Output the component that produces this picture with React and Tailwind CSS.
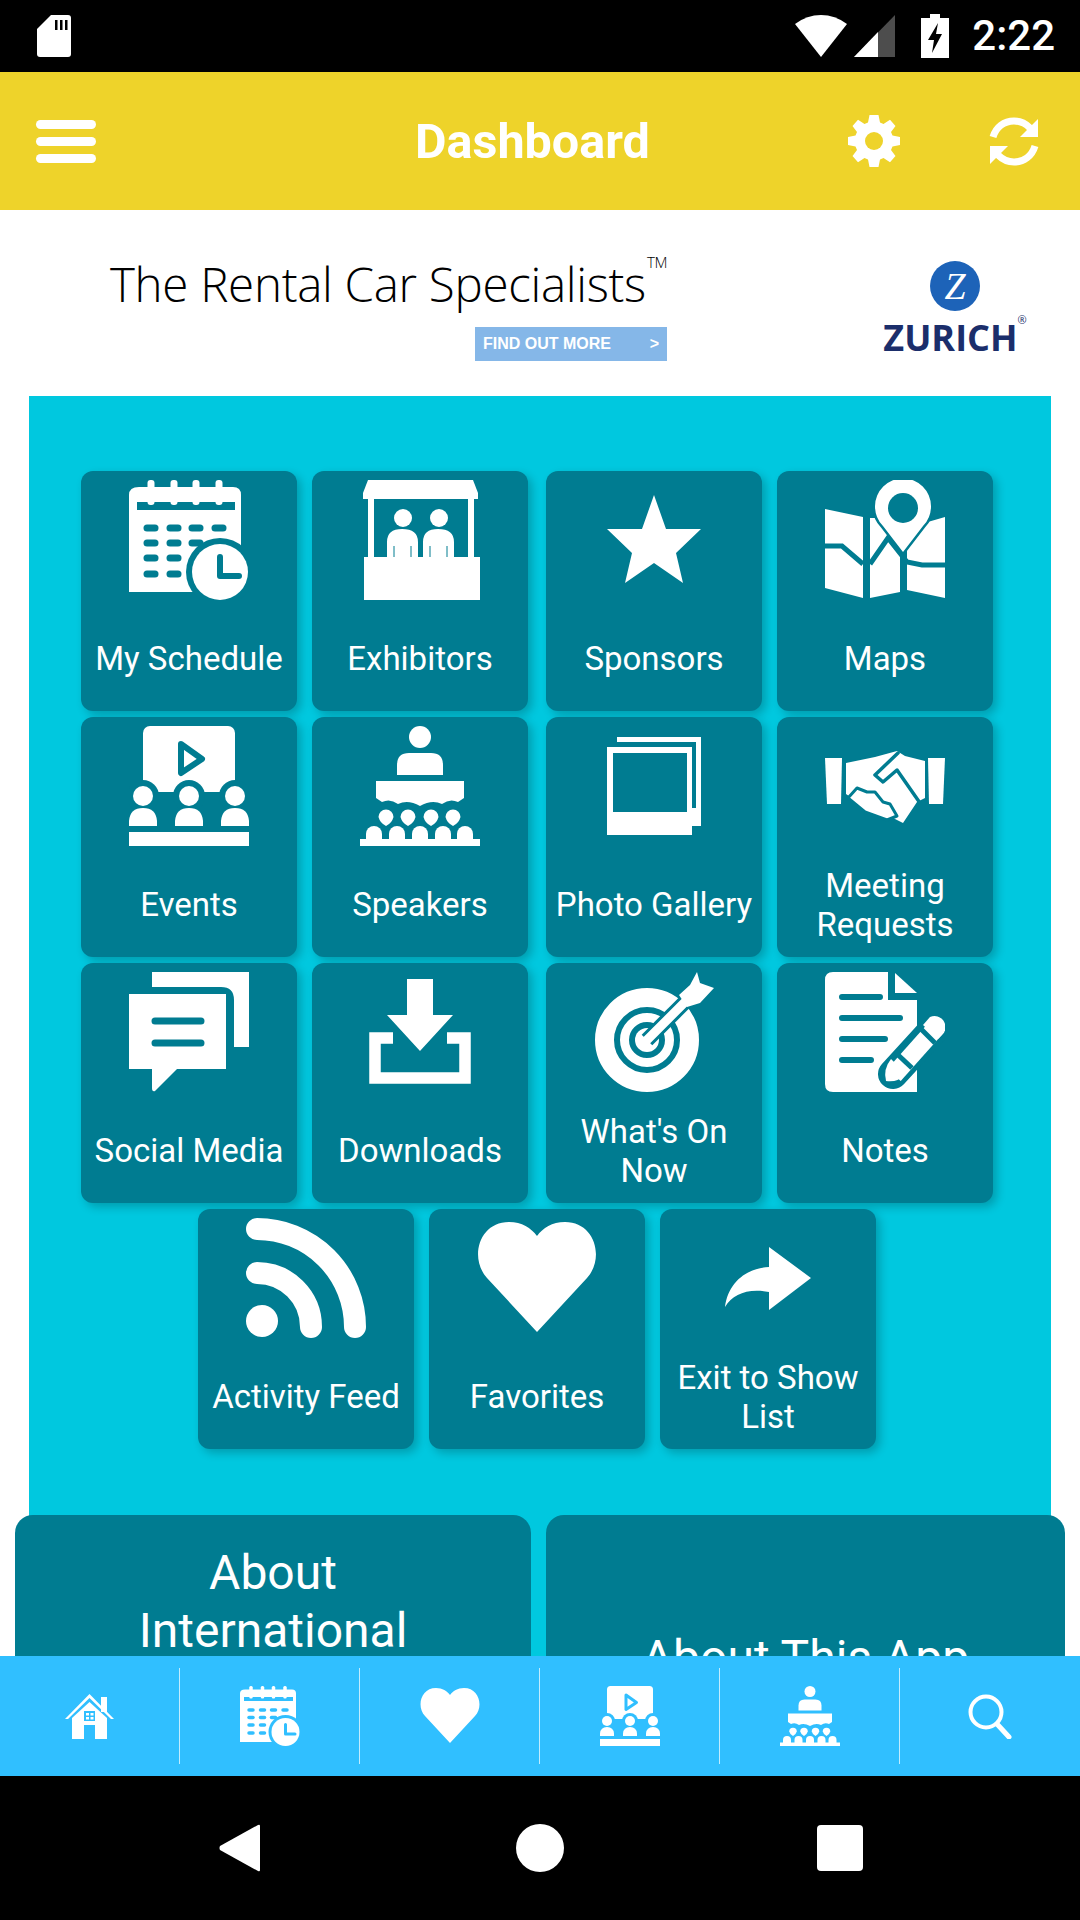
const TEAL = '#007c91'
const SKY = '#30bfff'

function CalendarIcon({ cut = TEAL, className }) {
  const cols = [22, 45, 67, 90]
  const rowsOfDots = [
    [48, 4],
    [63, 3],
    [78, 2],
    [94, 2],
  ]
  return (
    <svg viewBox="0 0 120 120" className={className}>
      <path d="M10 7H104Q112 7 112 15V112H0V15Q0 7 10 7Z" fill="#fff" />
      <path d="M8 22H106V30H8Z" fill={cut} />
      {cols.map((x) => (
        <rect key={x} x={x - 3.5} y="0" width="7" height="25" rx="3" fill="#fff" />
      ))}
      {rowsOfDots.map(([y, n]) =>
        cols.slice(0, n).map((x) => (
          <rect key={`${x}-${y}`} x={x - 7.5} y={y - 3.5} width="15" height="7" rx="3.5" fill={cut} />
        ))
      )}
      <circle cx="91" cy="92" r="34" fill={cut} />
      <path d="M112 58H120V92H112Z" fill={cut} />
      <circle cx="91" cy="92" r="28" fill="#fff" />
      <path d="M91 77V96H110" fill="none" stroke={cut} strokeWidth="6" strokeLinecap="round" strokeLinejoin="round" />
    </svg>
  )
}

function BoothIcon({ cut = TEAL, className }) {
  return (
    <svg viewBox="0 0 120 120" className={className}>
      <path d="M8 0H113L118 13V19H3V13Z" fill="#fff" />
      <rect x="8" y="19" width="6" height="60" fill="#fff" />
      <rect x="108" y="19" width="6" height="60" fill="#fff" />
      <path d="M27 77V62Q27 49 42 49Q58 49 58 62V77ZM63 77V62Q63 49 78 49Q94 49 94 62V77Z" fill="#fff" />
      <circle cx="43" cy="38" r="9" fill="#fff" />
      <circle cx="79" cy="38" r="9" fill="#fff" />
      <path d="M34 66V77M51 66V77M70 66V77M87 66V77" stroke={cut} strokeWidth="1" />
      <rect x="4" y="77" width="116" height="43" fill="#fff" />
    </svg>
  )
}

function StarIcon({ className }) {
  return (
    <svg viewBox="0 0 120 120" className={className}>
      <path d="M60 15L72 49H107L82 73L89 103L60 83L31 103L38 73L13 49H48Z" fill="#fff" />
    </svg>
  )
}

function MapIcon({ cut = TEAL, className }) {
  return (
    <svg viewBox="0 0 120 120" className={className}>
      <path d="M0 29L38 37V118L0 108ZM45 38H75V112L45 118ZM82 48L120 37V118L82 110Z" fill="#fff" />
      <path d="M0 66H17L38 84M45 84L63 58L82 82L97 85H120" fill="none" stroke={cut} strokeWidth="5" />
      <path d="M78 72L58 46A28 28 0 1 1 98 46Z" fill="#fff" stroke={cut} strokeWidth="5" strokeLinejoin="round" paintOrder="stroke" />
      <circle cx="78" cy="28" r="15" fill={cut} />
    </svg>
  )
}

function EventsIcon({ cut = TEAL, className }) {
  const people = [14, 60, 106]
  return (
    <svg viewBox="0 0 120 120" className={className}>
      <rect x="14" y="0" width="92" height="66" rx="7" fill="#fff" />
      <path d="M52 18L73 33L52 47Z" fill="none" stroke={cut} strokeWidth="6" strokeLinejoin="round" />
      {people.map((x) => (
        <g key={x}>
          <circle cx={x} cy="70" r="16" fill={cut} />
          <circle cx={x} cy="70" r="10" fill="#fff" />
          <path d={`M${x - 14} 100V95Q${x - 13} 82 ${x} 82Q${x + 13} 82 ${x + 14} 95V100Z`} fill="#fff" />
        </g>
      ))}
      <rect x="0" y="106" width="120" height="14" fill="#fff" />
    </svg>
  )
}

function SpeakerIcon({ className }) {
  return (
    <svg viewBox="0 0 120 120" className={className}>
      <circle cx="60" cy="11" r="11" fill="#fff" />
      <path d="M37 49V39Q37 27 49 27H71Q83 27 83 39V49Z" fill="#fff" />
      <path d="M16 55H104V72L98 76Q90 72 82 78Q72 73 60 80Q48 73 38 78Q30 72 22 76L16 72Z" fill="#fff" />
      {[26, 48, 71, 93].map((x) => (
        <path key={x} d={`M${x - 7.5} 91A7.5 7.5 0 0 1 ${x + 7.5} 91Q${x + 6} 97 ${x} 100Q${x - 6} 97 ${x - 7.5} 91Z`} fill="#fff" />
      ))}
      {[14, 37, 60, 83, 105].map((x) => (
        <path key={x} d={`M${x - 8} 114V108A8 8 0 0 1 ${x + 8} 108V114Z`} fill="#fff" />
      ))}
      <rect x="0" y="113" width="120" height="7" fill="#fff" />
    </svg>
  )
}

function GalleryIcon({ cut = TEAL, className }) {
  return (
    <svg viewBox="0 0 120 120" className={className}>
      <rect x="23" y="11" width="84" height="89" fill="#fff" />
      <rect x="18" y="16" width="84" height="66" fill={cut} />
      <rect x="13" y="21" width="85" height="88" fill="#fff" />
      <rect x="19" y="27" width="74" height="59" fill={cut} />
    </svg>
  )
}

function HandshakeIcon({ cut = TEAL, className }) {
  return (
    <svg viewBox="0 0 120 120" className={className}>
      <path d="M0 32H17L16 78H2Z" fill="#fff" />
      <path d="M103 32H120L118 78H104Z" fill="#fff" />
      <path d="M21 37L50 31L72 25L80 30L100 35V72L92 76L78 97L70 93L45 85L21 68Z" fill="#fff" />
      <path d="M50 49L73 27M50 49L58 56L72 44L95 77" fill="none" stroke={cut} strokeWidth="3.5" strokeLinejoin="round" strokeLinecap="round" />
      <path d="M23 72L32 62L42 66L50 66L58 76L65 78L72 90L62 94L40 86Z" fill="#fff" stroke={cut} strokeWidth="3" strokeLinejoin="round" />
    </svg>
  )
}

function SocialIcon({ cut = TEAL, className }) {
  return (
    <svg viewBox="0 0 120 120" className={className}>
      <path d="M23 0H120V75H105V28Q105 15 92 15H23Z" fill="#fff" />
      <path d="M0 22H97V97H48L26 119Q23 120 23 116V97H0Z" fill="#fff" />
      <path d="M26 49H72M26 71H72" stroke={cut} strokeWidth="7" strokeLinecap="round" />
    </svg>
  )
}

function DownloadIcon({ cut = TEAL, className }) {
  return (
    <svg viewBox="0 0 120 120" className={className}>
      <path d="M33 66H15V106H105V66H87" fill="none" stroke="#fff" strokeWidth="11.5" />
      <path d="M47 7H73V43H93L60 79L27 43H47Z" fill="#fff" stroke={cut} strokeWidth="5" paintOrder="stroke" />
    </svg>
  )
}

function TargetIcon({ cut = TEAL, className }) {
  return (
    <svg viewBox="0 0 120 120" className={className}>
      <circle cx="53" cy="68" r="42.5" fill="none" stroke="#fff" strokeWidth="19" />
      <circle cx="53" cy="68" r="22.5" fill="none" stroke="#fff" strokeWidth="9" />
      <circle cx="53" cy="68" r="12" fill="#fff" />
      <path d="M53 68L96 25" stroke={cut} strokeWidth="15" />
      <path d="M53 68L96 25" stroke="#fff" strokeWidth="9" strokeLinecap="round" />
      <path d="M103 0L106 11L120 16L106 31L93 35L85 23L96 13Z" fill="#fff" />
    </svg>
  )
}

function NotesIcon({ cut = TEAL, className }) {
  return (
    <svg viewBox="0 0 120 120" className={className}>
      <path d="M8 0H63V28H92V120H8Q0 120 0 112V8Q0 0 8 0Z" fill="#fff" />
      <path d="M70 1L92 21H70Z" fill="#fff" />
      <path d="M17 25H55M17 46H75M17 67H60M17 88H46" stroke={cut} strokeWidth="6" strokeLinecap="round" />
      <path d="M68 102L110 56" stroke={cut} strokeWidth="30" strokeLinecap="round" />
      <path d="M69 103L110 57" stroke="#fff" strokeWidth="18" />
      <path d="M105 45Q112 42 118 48Q123 55 118 62L113 67L98 53Z" fill="#fff" />
      <path d="M96 57L110 71" stroke={cut} strokeWidth="5" />
      <path d="M61 109Q58 97 66 87L81 102Q72 111 61 109Z" fill="#fff" />
      <path d="M71 81L87 96" stroke={cut} strokeWidth="5" />
    </svg>
  )
}

function RssIcon({ className }) {
  return (
    <svg viewBox="0 0 120 120" className={className}>
      <circle cx="16" cy="103" r="16" fill="#fff" />
      <path d="M11 55A54 54 0 0 1 65 109M11 11A98 98 0 0 1 109 109" fill="none" stroke="#fff" strokeWidth="22" strokeLinecap="round" />
    </svg>
  )
}

function HeartIcon({ className }) {
  return (
    <svg viewBox="0 0 120 120" className={className}>
      <path d="M60 114L10 60C-8 40 2 4 32 4C45 4 54 10 60 18C66 10 75 4 88 4C118 4 128 40 110 60Z" fill="#fff" />
    </svg>
  )
}

function ShareIcon({ className }) {
  return (
    <svg viewBox="0 0 120 120" className={className}>
      <path d="M61 29L103 60L61 92V74C40 70 25 76 17 89C20 65 38 50 61 49Z" fill="#fff" />
    </svg>
  )
}

function GearIcon({ className }) {
  return (
    <svg viewBox="0 0 52 52" className={className}>
      <path
        d="M21.5 0H30.5L32 7.5L35.5 9L42 4.8L47.5 11L43 17L44.5 20.5L52 22V30L44.5 31.5L43 35L47.5 41L42 47.2L35.5 43L32 44.5L30.5 52H21.5L20 44.5L16.5 43L10 47.2L4.5 41L9 35L7.5 31.5L0 30V22L7.5 20.5L9 17L4.5 11L10 4.8L16.5 9L20 7.5Z"
        fill="#fff"
      />
      <circle cx="26" cy="26" r="9" fill="#eed32a" />
    </svg>
  )
}

function RefreshIcon({ className }) {
  return (
    <svg viewBox="0 0 50 51" className={className}>
      <path d="M4 21C7 11 15 5 25 5C32 5 37 8 41 12" fill="none" stroke="#fff" strokeWidth="7" />
      <path d="M49 3V21H31Z" fill="#fff" />
      <path d="M46 30C43 40 35 46 25 46C18 46 13 43 9 39" fill="none" stroke="#fff" strokeWidth="7" />
      <path d="M1 48V30H19Z" fill="#fff" />
    </svg>
  )
}

const rows = [
  [
    ['My Schedule', CalendarIcon],
    ['Exhibitors', BoothIcon],
    ['Sponsors', StarIcon],
    ['Maps', MapIcon],
  ],
  [
    ['Events', EventsIcon],
    ['Speakers', SpeakerIcon],
    ['Photo Gallery', GalleryIcon],
    ['Meeting Requests', HandshakeIcon],
  ],
  [
    ['Social Media', SocialIcon],
    ['Downloads', DownloadIcon],
    ["What's On Now", TargetIcon],
    ['Notes', NotesIcon],
  ],
  [
    ['Activity Feed', RssIcon],
    ['Favorites', HeartIcon],
    ['Exit to Show List', ShareIcon],
  ],
]

function Tile({ label, Icon, wide }) {
  return (
    <div className={`flex h-[240px] w-[216px] flex-col items-center rounded-[12px] bg-[#007c91] pt-[9px] shadow-[4px_4px_10px_rgba(0,0,0,0.22)] ${wide ? 'ml-[3px]' : ''}`}>
      <Icon className="h-[120px] w-[120px] shrink-0" />
      <div className="flex flex-1 items-center justify-center px-[8px] pt-[6px] text-center text-[33px] leading-[39px] text-white">
        {label}
      </div>
    </div>
  )
}

function StatusBar() {
  return (
    <div className="flex h-[72px] shrink-0 items-center bg-black pl-[37px] pr-[25px]">
      <svg viewBox="0 0 34 42" className="h-[42px] w-[34px]">
        <path d="M14 0H31Q34 0 34 3V39Q34 42 31 42H3Q0 42 0 39V14Z" fill="#fff" />
        <path d="M18 5H20.5V15H18ZM23 5H25.5V15H23ZM28 5H30.5V15H28Z" fill="#000" />
      </svg>
      <svg viewBox="0 0 52 42" className="ml-auto h-[42px] w-[52px]">
        <path d="M26 42L0 9Q12 0 26 0Q40 0 52 9Z" fill="#fff" />
      </svg>
      <svg viewBox="0 0 41 42" className="ml-[7px] h-[42px] w-[41px]">
        <path d="M41 0V42H0Z" fill="#4d4d4d" />
        <path d="M24 17V42H0Z" fill="#fff" />
      </svg>
      <svg viewBox="0 0 28 44" className="ml-[26px] h-[44px] w-[28px]">
        <path d="M9 0H19V4H28V44H0V4H9Z" fill="#fff" />
        <path d="M17 9L7 26H13L11 39L21 20H15Z" fill="#000" />
      </svg>
      <div className="ml-[23px] text-[42px] font-medium leading-none text-white">2:22</div>
    </div>
  )
}

function Header() {
  return (
    <div className="flex h-[138px] shrink-0 items-center bg-[#eed32a] pl-[36px] text-white">
      <div className="flex w-[60px] flex-col gap-[8px]">
        <div className="h-[9px] rounded-full bg-white" />
        <div className="h-[9px] rounded-full bg-white" />
        <div className="h-[9px] rounded-full bg-white" />
      </div>
      <div className="ml-[319px] pt-[2px] text-[48.5px] font-bold leading-none">Dashboard</div>
      <GearIcon className="ml-auto h-[52px] w-[52px]" />
      <RefreshIcon className="ml-[89px] mr-[41px] h-[51px] w-[50px]" />
    </div>
  )
}

function AdBanner() {
  return (
    <div className="flex h-[186px] items-start bg-white">
      <div className="ml-[110px] mt-[43px] flex w-[557px] flex-col items-end">
        <div className="flex w-full items-start whitespace-nowrap font-['Open_Sans',sans-serif] text-[47.5px] font-light leading-[62px] tracking-[-0.3px] text-black">
          The Rental Car Specialists
          <span className="ml-[1px] mt-[-6px] text-[15px] leading-[30px]">TM</span>
        </div>
        <div className="mt-[12px] flex h-[34px] w-[192px] items-center justify-between bg-[#85b7e8] pl-[8px] pr-[8px] font-['Liberation_Sans',sans-serif] text-[16px] font-bold text-white">
          <span>FIND OUT MORE</span>
          <span>&gt;</span>
        </div>
      </div>
      <div className="ml-[219px] mt-[51px] flex w-[138px] flex-col items-center">
        <div className="flex h-[50px] w-[50px] items-center justify-center rounded-full bg-[#1d63b8] font-['Liberation_Serif',serif] text-[38px] italic leading-none text-white">
          Z
        </div>
        <div className="mt-[12px] flex items-start whitespace-nowrap font-['Open_Sans',sans-serif] text-[36px] font-bold leading-[30px] text-[#1b2e6b]">
          ZURICH
          <span className="mt-[-9px] text-[11px] font-normal leading-[12px]">®</span>
        </div>
      </div>
    </div>
  )
}

function TabBar() {
  const cut = SKY
  return (
    <div className="flex h-[120px] shrink-0 items-center bg-[#30bfff] py-[12px]">
      <div className="flex h-full w-[180px] items-center justify-center border-r border-white/70">
        <svg viewBox="0 0 49 45" className="h-[45px] w-[49px]">
          <path d="M36 3H42V18H36Z" fill="#fff" />
          <path d="M0 25L24.5 0L49 25L46 25L24.5 4L3 25Z" fill="#fff" />
          <path d="M7 45V24L24.5 8L42 24V45H30V31H19V45Z" fill="#fff" />
          <path d="M19 17H30V27H19Z" fill={cut} />
          <path d="M21 19H24V21.5H21ZM25.5 19H28.5V21.5H25.5ZM21 23H24V25.5H21ZM25.5 23H28.5V25.5H25.5Z" fill="#fff" />
        </svg>
      </div>
      <div className="flex h-full w-[180px] items-center justify-center border-r border-white/70">
        <CalendarIcon cut={cut} className="h-[60px] w-[60px]" />
      </div>
      <div className="flex h-full w-[180px] items-center justify-center border-r border-white/70">
        <HeartIcon className="h-[60px] w-[60px]" />
      </div>
      <div className="flex h-full w-[180px] items-center justify-center border-r border-white/70">
        <EventsIcon cut={cut} className="h-[60px] w-[60px]" />
      </div>
      <div className="flex h-full w-[180px] items-center justify-center border-r border-white/70">
        <SpeakerIcon className="h-[60px] w-[60px]" />
      </div>
      <div className="flex h-full w-[180px] items-center justify-center">
        <svg viewBox="0 0 44 45" className="h-[45px] w-[44px]">
          <circle cx="18" cy="18" r="15.5" fill="none" stroke="#fff" strokeWidth="4" />
          <path d="M29 30L41 43" stroke="#fff" strokeWidth="5" strokeLinecap="round" />
        </svg>
      </div>
    </div>
  )
}

function NavBar() {
  return (
    <div className="flex h-[144px] shrink-0 items-center bg-black pl-[219px]">
      <svg viewBox="0 0 41 48" className="h-[48px] w-[41px]">
        <path d="M41 2V46Q41 48 39 47L1 26Q0 24 1 22L39 1Q41 0 41 2Z" fill="#fff" />
      </svg>
      <div className="ml-[256px] h-[48px] w-[48px] rounded-full bg-white" />
      <div className="ml-[253px] h-[46px] w-[46px] rounded-[4px] bg-white" />
    </div>
  )
}

export default function App() {
  return (
    <div className="flex h-[1920px] w-[1080px] flex-col overflow-hidden bg-white font-['Roboto',sans-serif]">
      <StatusBar />
      <Header />
      <div className="min-h-0 flex-1 overflow-hidden">
        <AdBanner />
        <div className="mx-[29px] bg-[#00c8df] pb-[40px] pl-[52px] pr-[58px] pt-[75px]">
          <div className="flex flex-col gap-[6px]">
            {rows.map((row, r) => (
              <div key={r} className="flex justify-center gap-[15px]">
                {row.map(([label, Icon], i) => (
                  <Tile key={label} label={label} Icon={Icon} wide={i === 2 && r < 3} />
                ))}
              </div>
            ))}
          </div>
          <div className="-ml-[66px] -mr-[72px] mt-[66px] flex gap-[15px] text-[48px] leading-[58px] text-white">
            <div className="h-[286px] w-[516px] rounded-t-[18px] bg-[#007c91] px-[60px] pt-[29px] text-center">
              About International
            </div>
            <div className="flex h-[286px] w-[519px] items-center justify-center rounded-t-[18px] bg-[#007c91] text-center">
              About This App
            </div>
          </div>
        </div>
      </div>
      <TabBar />
      <NavBar />
    </div>
  )
}
